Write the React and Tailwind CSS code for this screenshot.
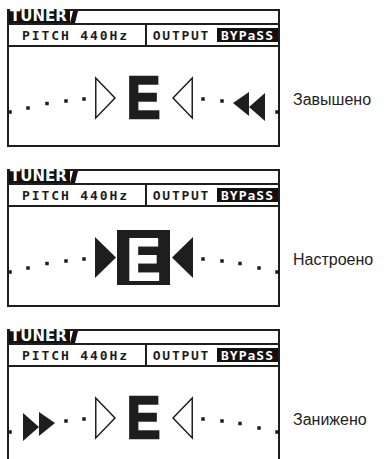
import React from "react";

const INK = "#1e1e1e";

function dotY(x) {
  const d = Math.abs(x - 144);
  if (d < 70) return 99;
  if (d < 88) return 101;
  if (d < 105) return 103.5;
  if (d < 124) return 108;
  return 112;
}

function Dot({ x }) {
  const y = dotY(x);
  return <rect x={x - 1.75} y={y - 1.75} width="3.5" height="3.5" fill={INK} />;
}

function Display({ mode }) {
  const leftDots = mode === "low" ? [10, 66, 84] : [10, 28, 47, 66, 84];
  const rightDots = mode === "high" ? [203, 222, 277] : [203, 222, 240, 259, 277];
  return (
    <svg width="269" height="98" viewBox="9 47 269 98" className="block">
      {leftDots.map((x) => (
        <Dot key={"l" + x} x={x} />
      ))}
      {rightDots.map((x) => (
        <Dot key={"r" + x} x={x} />
      ))}
      {mode === "tuned" ? (
        <>
          <polygon points="95,77 116,97.5 95,118" fill={INK} />
          <polygon points="193,77 172,97.5 193,118" fill={INK} />
          <rect x="117" y="70" width="53" height="55" fill={INK} />
          <text
            transform="translate(143.5 120) scale(0.84 1)"
            textAnchor="middle"
            fontFamily="'Liberation Sans', Arial, sans-serif"
            fontWeight="700"
            fontSize="60"
            fill="#fff"
            stroke="#fff"
            strokeWidth="1.8"
          >
            E
          </text>
        </>
      ) : (
        <>
          <polygon points="95.75,78 115,98 95.75,118" fill="none" stroke={INK} strokeWidth="1.5" />
          <polygon points="192.25,78 173,98 192.25,118" fill="none" stroke={INK} strokeWidth="1.5" />
          <text
            transform="translate(143.5 117.5) scale(0.84 1)"
            textAnchor="middle"
            fontFamily="'Liberation Sans', Arial, sans-serif"
            fontWeight="700"
            fontSize="60"
            fill={INK}
            stroke={INK}
            strokeWidth="2.4"
          >
            E
          </text>
        </>
      )}
      {mode === "high" && (
        <>
          <polygon points="233,103 249,92 249,116" fill={INK} />
          <polygon points="249,107 265,93 265,121" fill={INK} />
        </>
      )}
      {mode === "low" && (
        <>
          <polygon points="55,103 39,92 39,116" fill={INK} />
          <polygon points="39,107 23,93 23,121" fill={INK} />
        </>
      )}
    </svg>
  );
}

function Panel({ mode }) {
  return (
    <div className="w-[273px] h-[138px] shrink-0 border-2 border-[#1e1e1e] flex flex-col bg-white">
      <div className="h-[12px] flex items-stretch border-b-2 border-[#1e1e1e] box-content">
        <div className="w-[61px] h-[13px] -mt-[1px] bg-[#111] text-white flex items-center pl-[1px] font-['DejaVu_Sans',sans-serif] font-bold text-[15px] leading-[13px]">
          TUNER
        </div>
        <svg width="8" height="12" viewBox="0 0 8 12" className="block">
          <polygon points="3,0 8,0 5,12 0,12" fill="#111" />
        </svg>
      </div>
      <div className="h-[20px] flex border-b-2 border-[#1e1e1e] box-content font-['DejaVu_Sans_Mono',monospace] font-bold text-[13px] leading-none text-[#1e1e1e]">
        <div className="w-[133px] border-r-2 border-[#1e1e1e] box-content flex items-center pl-[13px] tracking-[1.9px] whitespace-nowrap">
          PITCH 440Hz
        </div>
        <div className="flex-1 flex items-center pl-[6px] whitespace-nowrap">
          <span className="tracking-[1.7px]">OUTPUT</span>
          <span className="ml-[7px] bg-[#111] text-white h-[14px] w-[61px] flex items-center justify-center tracking-[1px]">
            BYPaSS
          </span>
        </div>
      </div>
      <div className="flex-1 overflow-hidden">
        <Display mode={mode} />
      </div>
    </div>
  );
}

function Row({ mode, label }) {
  return (
    <div className="flex items-start">
      <Panel mode={mode} />
      <div className="ml-[13px] mt-[82px] font-['Liberation_Sans',Arial,sans-serif] text-[16px] leading-[18px] text-[#222] whitespace-nowrap">
        {label}
      </div>
    </div>
  );
}

export default function App() {
  return (
    <div className="w-[384px] h-[459px] overflow-hidden bg-white pt-[9px] pl-[7px] flex flex-col gap-[22px]">
      <Row mode="high" label="Завышено" />
      <Row mode="tuned" label="Настроено" />
      <Row mode="low" label="Занижено" />
    </div>
  );
}
